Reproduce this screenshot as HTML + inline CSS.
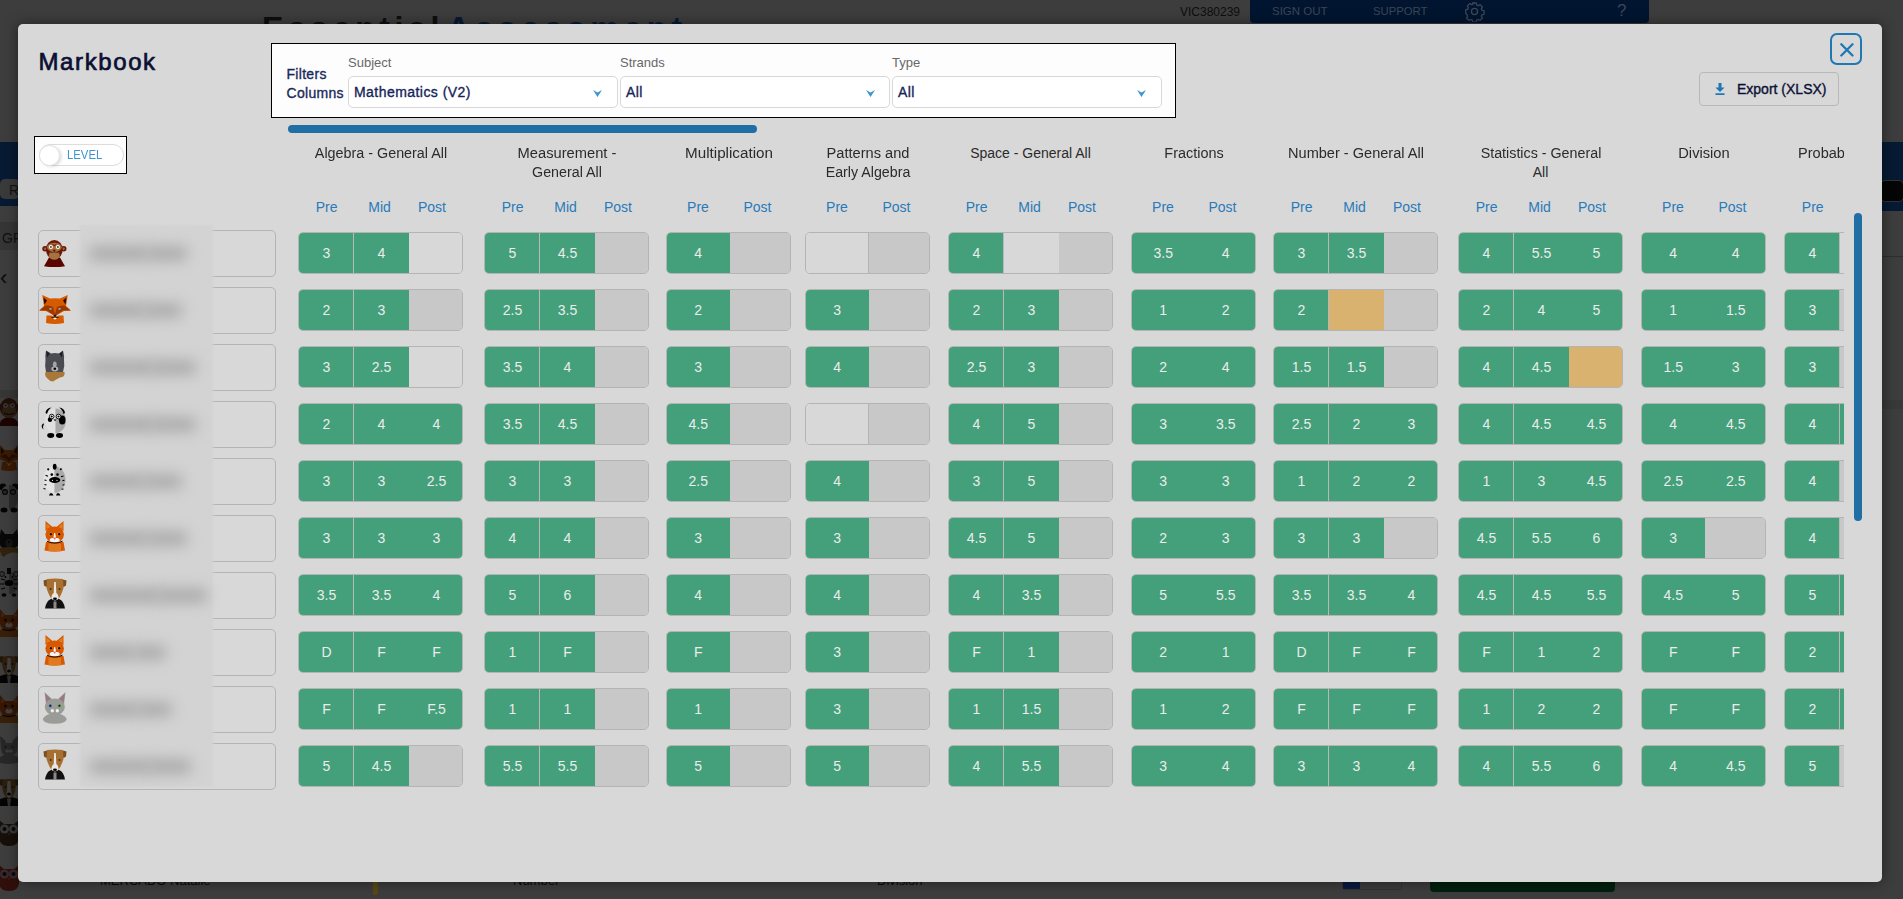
<!DOCTYPE html>
<html><head><meta charset="utf-8">
<style>
*{box-sizing:border-box;margin:0;padding:0}
html,body{width:1903px;height:899px;overflow:hidden;background:#3d3d3d;font-family:"Liberation Sans",sans-serif;position:relative}
.abs{position:absolute}
/* background app (dimmed) */
.bg{position:absolute;left:0;top:0;width:1903px;height:899px;overflow:hidden}
.modal{position:absolute;left:18px;top:24px;width:1864px;height:858px;background:#d8d8d8;border-radius:5px;box-shadow:0 0 14px rgba(0,0,0,.45)}
.page{position:absolute;left:0;top:0;width:1903px;height:899px}
.title{position:absolute;left:38.5px;top:48px;font-size:24px;font-weight:normal;-webkit-text-stroke:0.7px #0b1033;color:#0b1033;letter-spacing:1.6px}
.filt{position:absolute;left:271px;top:43px;width:905px;height:75px;background:#fdfdfd;border:1px solid #000}
.fl{position:absolute;font-size:14px;font-weight:normal;-webkit-text-stroke:0.35px #1c2a5a;letter-spacing:0.3px;color:#1c2a5a;line-height:19px}
.lab{position:absolute;font-size:13px;color:#686868}
.sel{position:absolute;top:76px;height:32px;border:1px solid #d8d8d8;border-radius:5px;background:#fff}
.sel span{position:absolute;left:5px;top:7px;font-size:14px;font-weight:normal;-webkit-text-stroke:0.35px #16245a;letter-spacing:0.45px;color:#16245a}
.chev{position:absolute;top:12.5px;width:9px;height:7px}
.prog{position:absolute;left:288px;top:125px;width:469px;height:8px;background:#1f6fa5;border-radius:4px}
.lvl{position:absolute;left:34px;top:136px;width:93px;height:38px;background:#fdfdfd;border:1px solid #000}
.pill{position:absolute;left:4px;top:7px;width:85px;height:22px;border:1px solid #ddd;border-radius:11px;background:#fff}
.knob{position:absolute;left:-1px;top:-0.5px;width:21px;height:21px;border-radius:50%;background:#fff;border:1px solid #e2e2e2;box-shadow:2px 1px 3px rgba(0,0,0,.12)}
.pill span{position:absolute;left:27px;top:2.5px;font-size:12.3px;color:#3d96cf;transform:scaleX(0.92);transform-origin:0 0}
.close{position:absolute;left:1830px;top:33px;width:32px;height:32px;border:2px solid #1f78b4;border-radius:7px}
.export{position:absolute;left:1699px;top:72px;width:140px;height:34px;border:1px solid #b8b8b8;border-radius:4px}
.export span{position:absolute;left:37px;top:8px;font-size:14px;font-weight:normal;-webkit-text-stroke:0.35px #0b1035;letter-spacing:0px;color:#0b1035}
.hd{position:absolute;top:144px;width:200px;text-align:center;font-size:14px;line-height:19px;color:#2b2b2b}
.pl{position:absolute;top:199px;width:60px;text-align:center;font-size:14px;color:#2a7ab8}
.grp{position:absolute;height:42px;border:1px solid #b4b4b4;border-radius:5px;overflow:hidden;display:flex;background:#d8d8d8}
.c{height:100%;flex:none;text-align:center;font-size:14px;line-height:40px;color:#ececec}
.c.g{background:#43a07a}
.c.x{background:#c8c8c8}
.c.o{background:#d8b26e}
.c.l{background:#d8d8d8}
.dv{position:absolute;top:0;width:1px;height:100%;background:#b9b9b9}
.dv.dk{background:#b4b4b4}
.clipcol{position:absolute;left:1784px;top:0;width:60px;height:899px;overflow:hidden}
.nm{position:absolute;left:38px;width:238px;height:47px;border:1px solid #b4b4b4;border-radius:5px}
.av{position:absolute;left:-1px;top:3px;width:34px;height:38px}
.blur{position:absolute;left:81px;top:226px;width:131px;height:560px;background:#d3d3d3;box-shadow:0 0 3px 1px #d4d4d4}
.smudge{position:absolute;height:15px;border-radius:8px;background:#acacac;filter:blur(7px)}
.sb{position:absolute;left:1854px;top:213px;width:8px;height:308px;background:#1f6fa5;border-radius:4px}
</style></head><body>
<div class="bg">
 <div class="abs" style="left:262px;top:12px;font-size:32px;font-weight:bold;color:#0e0e0e;white-space:nowrap;line-height:32px;letter-spacing:4.6px">Essential<span style="color:#071a33;letter-spacing:5.2px;margin-left:3px">Assessment</span></div>
<div class="abs" style="left:1250px;top:0;width:399px;height:23px;background:#011530;border-radius:0 0 4px 4px"></div>
<div class="abs" style="left:1180px;top:4.5px;font-size:12px;color:#0e0e0e">VIC380239</div>
<div class="abs" style="left:1272px;top:4.5px;font-size:11.5px;color:#3a4656">SIGN OUT</div>
<div class="abs" style="left:1373px;top:4.5px;font-size:11.3px;color:#3a4656">SUPPORT</div>
<svg class="abs" style="left:1464px;top:1px" width="21" height="21" viewBox="0 0 24 24"><path d="M12 2l2 .3.6 2.4 1.6.7 2.1-1.3 2.8 2.8-1.3 2.1.7 1.6 2.4.6v4l-2.4.6-.7 1.6 1.3 2.1-2.8 2.8-2.1-1.3-1.6.7-.6 2.4h-4l-.6-2.4-1.6-.7-2.1 1.3-2.8-2.8 1.3-2.1-.7-1.6L2 14v-4l2.4-.6.7-1.6-1.3-2.1 2.8-2.8 2.1 1.3 1.6-.7L10 2.3z" fill="none" stroke="#3a4656" stroke-width="1.5"/><circle cx="12" cy="12" r="3.5" fill="none" stroke="#3a4656" stroke-width="1.5"/></svg>
<div class="abs" style="left:1617px;top:1px;font-size:17px;color:#3a4656">?</div>
<!-- left strip -->
<div class="abs" style="left:0;top:142px;width:20px;height:64px;background:#061a33"></div>
<div class="abs" style="left:0;top:179px;width:20px;height:20px;background:#3a3a3a;border-radius:5px"></div>
<div class="abs" style="left:9px;top:182px;font-size:14px;color:#111">R</div>
<div class="abs" style="left:0;top:222px;width:20px;height:28px;background:#353535"></div>
<div class="abs" style="left:2px;top:230px;font-size:14px;color:#111">GR</div>
<div class="abs" style="left:0;top:266px;font-size:22px;color:#0a0a0a;line-height:24px">&lsaquo;</div>
<div class="abs" style="left:0;top:390px;width:20px;height:8px;background:#363636"></div>
<!-- right strip -->
<div class="abs" style="left:1882px;top:142px;width:21px;height:69px;background:#061a33"></div>
<div class="abs" style="left:1880px;top:180px;width:24px;height:22px;background:#050505;border:1px solid #333;border-radius:5px"></div>
<div class="abs" style="left:1882px;top:256px;width:21px;height:1px;background:#2e2e2e"></div>
<div class="abs" style="left:1882px;top:400px;width:21px;height:9px;background:#383838"></div>
<!-- bottom strip -->
<div class="abs" style="left:1430px;top:870px;width:185px;height:22px;background:#00200f;border-radius:4px"></div>
<div class="abs" style="left:1342px;top:872px;width:60px;height:18px;border:1px solid #333;border-radius:4px"></div>
<div class="abs" style="left:1343px;top:873px;width:17px;height:16px;background:#0a1a40"></div>
<div class="abs" style="left:373px;top:870px;width:5px;height:25px;background:#5a4a10;border-radius:2px"></div>
<div class="abs" style="left:100px;top:873px;font-size:13px;color:#0a0a0a">MERCADO Natalie</div>
<div class="abs" style="left:513px;top:873px;font-size:13px;color:#0a0a0a">Number</div>
<div class="abs" style="left:877px;top:873px;font-size:13px;color:#0a0a0a">Division</div>
<div class="abs" style="left:-4px;top:397px;filter:brightness(0.25)"><svg width="26" height="30" viewBox="0 0 26 30"><path d="M3 29 Q4 21 13 20 Q22 21 23 29Z" fill="#6b0f0f"/><circle cx="4" cy="10" r="3" fill="#7a3a1a"/><circle cx="22" cy="10" r="3" fill="#7a3a1a"/><ellipse cx="13" cy="11" rx="9" ry="10" fill="#7a3a1a"/><ellipse cx="13" cy="14" rx="7" ry="7" fill="#b07a4a"/><circle cx="9.5" cy="8.5" r="2.2" fill="#fff"/><circle cx="16.5" cy="8.5" r="2.2" fill="#fff"/><circle cx="9.5" cy="8.5" r="1" fill="#222"/><circle cx="16.5" cy="8.5" r="1" fill="#222"/><path d="M8 16 Q13 19 18 16" stroke="#3a1a0a" stroke-width="1.2" fill="none"/></svg></div><div class="abs" style="left:-4px;top:442px;filter:brightness(0.25)"><svg width="26" height="30" viewBox="0 0 26 30"><path d="M6 20 L20 20 L21 28 Q13 30 5 28Z" fill="#e46a10"/><path d="M3 2 L9 8 L17 8 L23 2 L22 14 L26 16 L18 19 L13 23 L8 19 L0 16 L4 14Z" fill="#e46a10"/><path d="M5 5 L8 10 L5 12Z M21 5 L18 10 L21 12Z" fill="#3a1a0a"/><path d="M4 14 L10 12 L13 16 L16 12 L22 14 L16 17 L13 20 L10 17Z" fill="#8a3a10"/><path d="M10 20 L13 22 L16 20 L13 24Z" fill="#fff"/></svg></div><div class="abs" style="left:-4px;top:483px;filter:brightness(0.25)"><svg width="26" height="30" viewBox="0 0 26 30"><circle cx="7" cy="4" r="3.5" fill="#111"/><circle cx="19" cy="4" r="3.5" fill="#111"/><ellipse cx="13" cy="14" rx="9" ry="12" fill="#eee"/><path d="M13 2 Q22 2 22 14 Q22 26 13 26Z" fill="#aaa"/><ellipse cx="9" cy="9" rx="3" ry="3" fill="#111"/><ellipse cx="17" cy="9" rx="3" ry="3" fill="#111"/><circle cx="9" cy="9" r="1.6" fill="#fff"/><circle cx="17" cy="9" r="1.6" fill="#fff"/><circle cx="9" cy="9" r="0.8" fill="#111"/><circle cx="17" cy="9" r="0.8" fill="#111"/><ellipse cx="8" cy="27" rx="3.5" ry="2.5" fill="#111"/><ellipse cx="18" cy="27" rx="3.5" ry="2.5" fill="#111"/><path d="M2 16 Q0 19 2 21Z" fill="#111"/></svg></div><div class="abs" style="left:-4px;top:527px;filter:brightness(0.25)"><svg width="26" height="30" viewBox="0 0 26 30"><path d="M5 2 L9 7 L17 7 L21 2 L23 14 Q23 22 13 23 Q3 22 3 14Z" fill="#202020"/><path d="M5 3 L8 8 L5 10Z M21 3 L18 8 L21 10Z" fill="#222"/><ellipse cx="13" cy="16" rx="3.5" ry="4" fill="#555"/><circle cx="13" cy="15" r="1.4" fill="#222"/><path d="M2 22 Q13 18 24 22 L22 26 Q13 24 8 30 L5 28 Q6 25 2 24Z" fill="#c08a3a"/></svg></div><div class="abs" style="left:-4px;top:567px;filter:brightness(0.25)"><svg width="26" height="30" viewBox="0 0 26 30"><ellipse cx="13" cy="16" rx="9" ry="11" fill="#eee"/><path d="M13 5 Q22 5 22 16 Q22 27 13 27Z" fill="#aaa"/><path d="M11 1 L15 1 L15 7 L11 7Z" fill="#111"/><circle cx="6" cy="7" r="2.5" fill="#ccc" stroke="#111" stroke-width="0.8"/><circle cx="20" cy="7" r="2.5" fill="#ccc" stroke="#111" stroke-width="0.8"/><path d="M5 12 L9 13 M4 17 L8 17 M5 22 L9 21 M21 12 L17 13 M22 17 L18 17 M21 22 L17 21" stroke="#111" stroke-width="1.2"/><ellipse cx="13" cy="16" rx="4.5" ry="3" fill="#111"/><circle cx="9.5" cy="10" r="1" fill="#111"/><circle cx="16.5" cy="10" r="1" fill="#111"/><ellipse cx="8" cy="28" rx="2.5" ry="1.8" fill="#111"/><ellipse cx="18" cy="28" rx="2.5" ry="1.8" fill="#111"/></svg></div><div class="abs" style="left:-4px;top:608px;filter:brightness(0.25)"><svg width="26" height="30" viewBox="0 0 26 30"><path d="M4 22 Q13 19 22 22 L23 29 L3 29Z" fill="#e07a20"/><path d="M4 1 L9 7 L17 7 L22 1 L22 15 Q22 22 13 22 Q4 22 4 15Z" fill="#e05a10"/><path d="M6 4 L8 8 L5 9Z M20 4 L18 8 L21 9Z" fill="#f0a060"/><circle cx="9.5" cy="12" r="1.5" fill="#222"/><circle cx="16.5" cy="12" r="1.5" fill="#222"/><ellipse cx="13" cy="17" rx="3.5" ry="2.5" fill="#fff"/><path d="M12 15 L14 15 L13 16.5Z" fill="#e05a70"/><path d="M6 21 Q13 24 20 21" stroke="#222" stroke-width="1.3" fill="none"/></svg></div><div class="abs" style="left:-4px;top:654px;filter:brightness(0.25)"><svg width="26" height="30" viewBox="0 0 26 30"><path d="M4 22 Q13 18 22 22 L23 29 L3 29Z" fill="#111"/><path d="M11 22 L15 22 L14 29 L12 29Z" fill="#bbb"/><path d="M5 3 Q13 1 21 3 L19 15 Q16 22 13 22 Q10 22 7 15Z" fill="#b57a35"/><path d="M11.5 4 L14.5 4 L15 14 Q17 19 13 21 Q9 19 11 14Z" fill="#fff"/><path d="M2 3 L7 2 L6 9 Q3 8 2 6Z M24 3 L19 2 L20 9 Q23 8 24 6Z" fill="#8a5520"/><ellipse cx="13" cy="17" rx="2" ry="1.5" fill="#111"/><circle cx="9.5" cy="10" r="0.9" fill="#224"/><circle cx="16.5" cy="10" r="0.9" fill="#224"/></svg></div><div class="abs" style="left:-4px;top:694px;filter:brightness(0.25)"><svg width="26" height="30" viewBox="0 0 26 30"><path d="M4 22 Q13 19 22 22 L23 29 L3 29Z" fill="#e07a20"/><path d="M4 1 L9 7 L17 7 L22 1 L22 15 Q22 22 13 22 Q4 22 4 15Z" fill="#e05a10"/><path d="M6 4 L8 8 L5 9Z M20 4 L18 8 L21 9Z" fill="#f0a060"/><circle cx="9.5" cy="12" r="1.5" fill="#222"/><circle cx="16.5" cy="12" r="1.5" fill="#222"/><ellipse cx="13" cy="17" rx="3.5" ry="2.5" fill="#fff"/><path d="M12 15 L14 15 L13 16.5Z" fill="#e05a70"/><path d="M6 21 Q13 24 20 21" stroke="#222" stroke-width="1.3" fill="none"/></svg></div><div class="abs" style="left:-4px;top:735px;filter:brightness(0.25)"><svg width="26" height="30" viewBox="0 0 26 30"><path d="M2 27 Q3 20 13 19 Q23 20 24 27 Q13 31 2 27Z" fill="#9a9c98"/><path d="M4 1 Q9 4 10 8 L16 8 Q17 4 22 1 L21 14 Q21 21 13 21 Q5 21 5 14Z" fill="#9a9c98"/><path d="M5 3 Q8 6 9 8 L6 10Z M21 3 Q18 6 17 8 L20 10Z" fill="#b48890"/><circle cx="9.5" cy="12" r="1.2" fill="#2a6aaa"/><circle cx="16.5" cy="12" r="1.2" fill="#4a8a2a"/><ellipse cx="11.3" cy="16" rx="2" ry="1.6" fill="#eee"/><ellipse cx="14.7" cy="16" rx="2" ry="1.6" fill="#eee"/><path d="M12 13.5 L14 13.5 L13 15Z" fill="#d08890"/></svg></div><div class="abs" style="left:-4px;top:777px;filter:brightness(0.25)"><svg width="26" height="30" viewBox="0 0 26 30"><path d="M4 22 Q13 18 22 22 L23 29 L3 29Z" fill="#111"/><path d="M11 22 L15 22 L14 29 L12 29Z" fill="#bbb"/><path d="M5 3 Q13 1 21 3 L19 15 Q16 22 13 22 Q10 22 7 15Z" fill="#b57a35"/><path d="M11.5 4 L14.5 4 L15 14 Q17 19 13 21 Q9 19 11 14Z" fill="#fff"/><path d="M2 3 L7 2 L6 9 Q3 8 2 6Z M24 3 L19 2 L20 9 Q23 8 24 6Z" fill="#8a5520"/><ellipse cx="13" cy="17" rx="2" ry="1.5" fill="#111"/><circle cx="9.5" cy="10" r="0.9" fill="#224"/><circle cx="16.5" cy="10" r="0.9" fill="#224"/></svg></div><div class="abs" style="left:-4px;top:817px;filter:brightness(0.25)"><svg width="26" height="30" viewBox="0 0 26 30"><path d="M3 3 L8 7 L18 7 L23 3 L23 20 Q23 29 13 29 Q3 29 3 20Z" fill="#5a3a2a"/><circle cx="8.5" cy="12" r="4.5" fill="#ddd"/><circle cx="17.5" cy="12" r="4.5" fill="#ddd"/><circle cx="8.5" cy="12" r="2" fill="#222"/><circle cx="17.5" cy="12" r="2" fill="#222"/><path d="M12 16 L14 16 L13 19Z" fill="#e07020"/></svg></div><div class="abs" style="left:-4px;top:862px;filter:brightness(0.25)"><svg width="26" height="30" viewBox="0 0 26 30"><path d="M3 3 L8 7 L18 7 L23 3 L23 20 Q23 29 13 29 Q3 29 3 20Z" fill="#c03a2a"/><circle cx="8.5" cy="12" r="4.5" fill="#e0a0c0"/><circle cx="17.5" cy="12" r="4.5" fill="#e0a0c0"/><circle cx="8.5" cy="12" r="2" fill="#222"/><circle cx="17.5" cy="12" r="2" fill="#222"/><path d="M12 16 L14 16 L13 19Z" fill="#e07020"/></svg></div>
</div>
<div class="modal"></div>
<div class="page">
 <div class="title">Markbook</div>
 <div class="filt">
  <div class="fl" style="left:14.5px;top:20.7px">Filters<br>Columns</div>
 </div>
 <div class="lab" style="left:348px;top:55.2px">Subject</div>
 <div class="lab" style="left:620px;top:55.2px">Strands</div>
 <div class="lab" style="left:892px;top:55.2px">Type</div>
 <div class="sel" style="left:348px;width:270px"><span>Mathematics (V2)</span><svg class="chev" style="left:244px" viewBox="0 0 9 7"><path d="M0 0 L4.5 2.6 L9 0 L4.5 7Z" fill="#3a96cf"/></svg></div>
 <div class="sel" style="left:620px;width:270px"><span>All</span><svg class="chev" style="left:245px" viewBox="0 0 9 7"><path d="M0 0 L4.5 2.6 L9 0 L4.5 7Z" fill="#3a96cf"/></svg></div>
 <div class="sel" style="left:892px;width:270px"><span>All</span><svg class="chev" style="left:244px" viewBox="0 0 9 7"><path d="M0 0 L4.5 2.6 L9 0 L4.5 7Z" fill="#3a96cf"/></svg></div>
 <div class="prog"></div>
 <div class="lvl"><div class="pill"><div class="knob"></div><span>LEVEL</span></div></div>
 <div class="close"><svg style="position:absolute;left:8px;top:8px" width="14" height="14" viewBox="0 0 14 14"><path d="M1.3 1.3 L12.5 12.5 M12.5 1.3 L1.3 12.5" stroke="#1f78b4" stroke-width="2.3" stroke-linecap="round"/></svg></div>
 <div class="export"><svg style="position:absolute;left:15px;top:10px" width="10" height="12" viewBox="0 0 10 12"><path d="M3.5 0 H6.5 V4.5 H9.5 L5 9 L0.5 4.5 H3.5Z" fill="#1f78b4"/><rect x="0.3" y="10.3" width="9.4" height="1.7" rx="0.8" fill="#1f78b4"/></svg><span>Export (XLSX)</span></div>
<div class="nm" style="top:230px"><div class="av"><svg width="34" height="38" viewBox="0 0 34 38"><path d="M6 32.2 Q16.5 34 27 32.2 L22 23.5 L11 23.5 Z" fill="#5a0600"/><circle cx="7" cy="14.8" r="2.7" fill="#6b1808"/><circle cx="25.8" cy="14.8" r="2.7" fill="#6b1808"/><circle cx="7.4" cy="14.8" r="1.4" fill="#a06a38"/><circle cx="25.4" cy="14.8" r="1.4" fill="#a06a38"/><ellipse cx="16.3" cy="15.5" rx="8.4" ry="9.6" fill="#6b1808"/><ellipse cx="16.3" cy="13.3" rx="7.3" ry="4.6" fill="#a8723e"/><ellipse cx="16.3" cy="21.3" rx="5.4" ry="4.4" fill="#a8723e"/><path d="M13 9 L16.3 11 L19.6 9 L16.3 12.5Z" fill="#6b1808"/><circle cx="12.9" cy="12.9" r="2" fill="#fff"/><circle cx="19.9" cy="12.9" r="2" fill="#fff"/><circle cx="12.9" cy="12.9" r="1" fill="#444"/><circle cx="19.9" cy="12.9" r="1" fill="#444"/><path d="M14.8 15.8 L17.8 15.8 L16.3 18Z" fill="#4a0800"/><path d="M12.5 18.6 Q16.3 17.6 20.1 18.6" stroke="#3a2010" stroke-width="0.7" fill="none"/></svg></div></div>
<div class="nm" style="top:287px"><div class="av"><svg width="34" height="38" viewBox="0 0 34 38"><path d="M8.5 24.5 L13.5 24.5 Q17 28 20.5 24.5 L25.5 24.5 L26 32 Q17 34 8 32 Z" fill="#d65a00"/><path d="M4.2 4 L12 7.5 Q17 6.8 22 7.5 L29.8 4 L28 15 L33 19.5 L26 20 L19 24 L17 25 L15 24 L8 20 L1 19.5 L6 15 Z" fill="#d65a00"/><path d="M5.5 6.5 L9 9.5 L6.5 13.5Z M28.5 6.5 L25 9.5 L27.5 13.5Z" fill="#2a0800"/><path d="M1.5 19.5 L7.5 14.5 Q12 14 15 16 L17 23 L19 16 Q22 14 26.5 14.5 L32.5 19.5 L25 19.5 L18.5 24 L15.5 24 L9 19.5Z" fill="#9a3800"/><ellipse cx="12.5" cy="17.8" rx="1.3" ry="0.9" fill="#9ab0c8"/><ellipse cx="21.5" cy="17.8" rx="1.3" ry="0.9" fill="#9ab0c8"/><ellipse cx="17" cy="24.8" rx="1.6" ry="0.9" fill="#000"/><path d="M13.5 26.5 Q17 25.5 20.5 26.5" stroke="#000" stroke-width="0.8" fill="none"/><ellipse cx="17" cy="27.6" rx="1.6" ry="0.8" fill="#fff"/></svg></div></div>
<div class="nm" style="top:344px"><div class="av"><svg width="34" height="38" viewBox="0 0 34 38"><path d="M7 24.5 Q17 22 26.5 24 Q27.5 29 22 29.5 Q19 31 15 33.5 Q12 33.5 10 31 Q7 29 7 24.5Z" fill="#a87838"/><path d="M8 2.5 Q11 4 13 5.5 Q17 4.5 21 5.5 Q23 4 25 2.5 Q26.5 8 26 12 Q27 18 25 24 L8 24 Q6.5 18 7.5 12 Q7 8 8 2.5Z" fill="#4a4c52"/><path d="M8.2 3 L11.8 5.8 L9 9.5Z M24.8 3 L21.2 5.8 L24 9.5Z" fill="#1e1e22"/><ellipse cx="16.8" cy="16.5" rx="1.9" ry="3" fill="#a4a4a4"/><ellipse cx="16.8" cy="21" rx="3.5" ry="2.4" fill="#b0b0b0"/><circle cx="16.8" cy="20.8" r="1.3" fill="#000"/></svg></div></div>
<div class="nm" style="top:401px"><div class="av"><svg width="34" height="38" viewBox="0 0 34 38"><path d="M17.5 3.4 A10.5 12.3 0 0 0 17.5 28 Z" fill="#e0e0e0"/><path d="M17.5 3.4 A10.5 12.3 0 0 1 17.5 28 Z" fill="#a8a8a8"/><path d="M7.5 8 Q8 3 13.5 2.5 Q10 4.5 9 9Z" fill="#000"/><path d="M27 8 Q26.5 3 21 2.5 Q24.5 4.5 25.5 9Z" fill="#000"/><ellipse cx="24.2" cy="15" rx="3.3" ry="4.6" fill="#000"/><ellipse cx="12" cy="14.5" rx="2.2" ry="2.5" fill="#000"/><circle cx="13.7" cy="11.5" r="2.3" fill="#fff" stroke="#000" stroke-width="0.9"/><circle cx="20.5" cy="11.5" r="2.3" fill="#fff" stroke="#000" stroke-width="0.9"/><circle cx="13.7" cy="11.5" r="1.1" fill="#000"/><circle cx="20.5" cy="11.5" r="1.1" fill="#000"/><path d="M15.5 14.5 L18.5 14.5 L17 16.3Z" fill="#000"/><path d="M5 18.5 Q2 21.5 5.5 24.5 Q4.5 21.5 6 18.8Z" fill="#000"/><ellipse cx="12.7" cy="30.5" rx="3.5" ry="2.4" fill="#000"/><ellipse cx="21.5" cy="30.5" rx="3.5" ry="2.4" fill="#000"/></svg></div></div>
<div class="nm" style="top:458px"><div class="av"><svg width="34" height="38" viewBox="0 0 34 38"><path d="M16.5 4.2 A11 13.3 0 0 0 16.5 30.8 Z" fill="#e4e4e4"/><path d="M16.5 4.2 A11 13.3 0 0 1 16.5 30.8 Z" fill="#aaaaaa"/><ellipse cx="16.7" cy="4.8" rx="1.9" ry="3" fill="#000"/><ellipse cx="10" cy="7" rx="2" ry="1.8" fill="#ddd"/><ellipse cx="23" cy="7" rx="2" ry="1.8" fill="#ccc"/><ellipse cx="10.2" cy="7.3" rx="1.1" ry="1.1" fill="#000"/><ellipse cx="22.8" cy="7.3" rx="1.1" ry="1.1" fill="#000"/><circle cx="13.8" cy="12.6" r="1.3" fill="#000"/><circle cx="19.5" cy="12.6" r="1.3" fill="#000"/><ellipse cx="16.7" cy="18" rx="5.6" ry="3" fill="#000"/><circle cx="14.5" cy="18.3" r="0.6" fill="#fff"/><circle cx="19" cy="18.3" r="0.6" fill="#fff"/><path d="M7.5 13.3 L10 14.3 M6.5 18 L8.5 18.5 M6.5 22.5 L8.5 23 M5.5 26.5 L7.5 27 M25.5 14 L23 14.8 M26.5 18.3 L24.5 18.6 M26.5 22.8 L24.5 23 M25.5 27 L23.5 27.3" stroke="#000" stroke-width="1.1"/><path d="M11 33.5 Q11.5 31 13 31 Q14.8 31 15.5 33.5Z M18 33.5 Q18.5 31 20 31 Q21.8 31 22.5 33.5Z" fill="#000"/></svg></div></div>
<div class="nm" style="top:515px"><div class="av"><svg width="34" height="38" viewBox="0 0 34 38"><path d="M8 23 L25.5 23 L27 31.5 Q16.7 33.5 6.5 31.5Z" fill="#d85800"/><path d="M10.5 24.5 L23 24.5 L23 32.3 Q16.7 33 10.5 32.3Z" fill="#e07a20"/><path d="M7.5 2 L14.5 8 L7.5 12Z M25.5 2 L18.5 8 L25.5 12Z" fill="#d85800"/><path d="M8.5 4.5 L12.5 8 L8.5 10Z M24.5 4.5 L20.5 8 L24.5 10Z" fill="#e08020"/><ellipse cx="16.7" cy="15.5" rx="9.3" ry="8" fill="#d85800"/><circle cx="12.7" cy="15.3" r="1.9" fill="#e08020"/><circle cx="21" cy="15.3" r="1.9" fill="#e08020"/><circle cx="12.9" cy="15.3" r="1.2" fill="#2a0a00"/><circle cx="21.2" cy="15.3" r="1.2" fill="#2a0a00"/><path d="M16.2 14 L17.2 14 L18 18.5 L15.4 18.5Z" fill="#f4f4f4"/><ellipse cx="16.7" cy="21" rx="5" ry="2.3" fill="#f4f4f4"/><path d="M15.4 19.3 L18 19.3 L16.7 20.8Z" fill="#d84060"/><path d="M9 22.2 Q16.7 26 24.5 22.2" stroke="#1a0500" stroke-width="1" fill="none"/></svg></div></div>
<div class="nm" style="top:572px"><div class="av"><svg width="34" height="38" viewBox="0 0 34 38"><path d="M7 32.5 Q8 25 13 23 L21 23 Q26 25 27 32.5Z" fill="#111"/><path d="M15.5 25.5 L18.5 25.5 L18.5 33 L15.5 33Z" fill="#8a8a8a"/><path d="M5.5 4.5 Q9 3 12 3.5 L11 10.5 Q8 11.5 6 9.5 Z M28.5 4.5 Q25 3 22 3.5 L23 10.5 Q26 11.5 28 9.5Z" fill="#7a5020"/><path d="M9 3 Q17 1.8 25 3 L25.5 12 Q23 20 20 23.5 L14 23.5 Q11 20 8.5 12 Z" fill="#a87030"/><path d="M16.2 6 L17.8 6 L18.3 17 Q21 19 20.5 22.8 Q17 26 13.5 22.8 Q13 19 15.7 17Z" fill="#e8e8e8"/><circle cx="12.7" cy="13" r="1" fill="#333"/><circle cx="21.5" cy="13" r="1" fill="#333"/><ellipse cx="17" cy="22.8" rx="2" ry="1.3" fill="#000"/></svg></div></div>
<div class="nm" style="top:629px"><div class="av"><svg width="34" height="38" viewBox="0 0 34 38"><path d="M8 23 L25.5 23 L27 31.5 Q16.7 33.5 6.5 31.5Z" fill="#d85800"/><path d="M10.5 24.5 L23 24.5 L23 32.3 Q16.7 33 10.5 32.3Z" fill="#e07a20"/><path d="M7.5 2 L14.5 8 L7.5 12Z M25.5 2 L18.5 8 L25.5 12Z" fill="#d85800"/><path d="M8.5 4.5 L12.5 8 L8.5 10Z M24.5 4.5 L20.5 8 L24.5 10Z" fill="#e08020"/><ellipse cx="16.7" cy="15.5" rx="9.3" ry="8" fill="#d85800"/><circle cx="12.7" cy="15.3" r="1.9" fill="#e08020"/><circle cx="21" cy="15.3" r="1.9" fill="#e08020"/><circle cx="12.9" cy="15.3" r="1.2" fill="#2a0a00"/><circle cx="21.2" cy="15.3" r="1.2" fill="#2a0a00"/><path d="M16.2 14 L17.2 14 L18 18.5 L15.4 18.5Z" fill="#f4f4f4"/><ellipse cx="16.7" cy="21" rx="5" ry="2.3" fill="#f4f4f4"/><path d="M15.4 19.3 L18 19.3 L16.7 20.8Z" fill="#d84060"/><path d="M9 22.2 Q16.7 26 24.5 22.2" stroke="#1a0500" stroke-width="1" fill="none"/></svg></div></div>
<div class="nm" style="top:686px"><div class="av"><svg width="34" height="38" viewBox="0 0 34 38"><path d="M4.8 29 Q7 24 16.8 23 Q26.5 24 28.8 29 Q28 33.5 16.8 33.8 Q5 33.5 4.8 29Z" fill="#9a9c98"/><path d="M6.5 2 L14 9 L8 14.5Z M27.5 2 L20 9 L26 14.5Z" fill="#9a9c98"/><path d="M7.2 3.5 L12.8 9 L8.6 13Z M26.8 3.5 L21.2 9 L25.4 13Z" fill="#9a7880"/><ellipse cx="16.8" cy="17" rx="10" ry="8.5" fill="#9a9c98"/><circle cx="12.3" cy="15.8" r="1.5" fill="#2060a0"/><circle cx="21.4" cy="15.8" r="1.5" fill="#3a8a20"/><circle cx="12.3" cy="15.8" r="0.8" fill="#111"/><circle cx="21.4" cy="15.8" r="0.8" fill="#111"/><circle cx="14.3" cy="20.8" r="1.7" fill="#eee"/><circle cx="19.3" cy="20.8" r="1.7" fill="#eee"/><path d="M15.6 18.6 L17.8 18.6 L16.7 20Z" fill="#c08890"/></svg></div></div>
<div class="nm" style="top:743px"><div class="av"><svg width="34" height="38" viewBox="0 0 34 38"><path d="M7 32.5 Q8 25 13 23 L21 23 Q26 25 27 32.5Z" fill="#111"/><path d="M15.5 25.5 L18.5 25.5 L18.5 33 L15.5 33Z" fill="#8a8a8a"/><path d="M5.5 4.5 Q9 3 12 3.5 L11 10.5 Q8 11.5 6 9.5 Z M28.5 4.5 Q25 3 22 3.5 L23 10.5 Q26 11.5 28 9.5Z" fill="#7a5020"/><path d="M9 3 Q17 1.8 25 3 L25.5 12 Q23 20 20 23.5 L14 23.5 Q11 20 8.5 12 Z" fill="#a87030"/><path d="M16.2 6 L17.8 6 L18.3 17 Q21 19 20.5 22.8 Q17 26 13.5 22.8 Q13 19 15.7 17Z" fill="#e8e8e8"/><circle cx="12.7" cy="13" r="1" fill="#333"/><circle cx="21.5" cy="13" r="1" fill="#333"/><ellipse cx="17" cy="22.8" rx="2" ry="1.3" fill="#000"/></svg></div></div>
 <div class="blur"><div class="smudge" style="left:7px;top:19.5px;width:62px"></div><div class="smudge" style="left:64px;top:19.5px;width:43px"></div><div class="smudge" style="left:7px;top:76.5px;width:59px"></div><div class="smudge" style="left:61px;top:76.5px;width:41px"></div><div class="smudge" style="left:7px;top:133.5px;width:68px"></div><div class="smudge" style="left:69px;top:133.5px;width:47px"></div><div class="smudge" style="left:7px;top:190.5px;width:68px"></div><div class="smudge" style="left:69px;top:190.5px;width:47px"></div><div class="smudge" style="left:7px;top:247.5px;width:59px"></div><div class="smudge" style="left:61px;top:247.5px;width:41px"></div><div class="smudge" style="left:7px;top:304.5px;width:62px"></div><div class="smudge" style="left:64px;top:304.5px;width:43px"></div><div class="smudge" style="left:7px;top:361.5px;width:74px"></div><div class="smudge" style="left:75px;top:361.5px;width:52px"></div><div class="smudge" style="left:7px;top:418.5px;width:49px"></div><div class="smudge" style="left:52px;top:418.5px;width:34px"></div><div class="smudge" style="left:7px;top:475.5px;width:53px"></div><div class="smudge" style="left:55px;top:475.5px;width:37px"></div><div class="smudge" style="left:7px;top:532.5px;width:65px"></div><div class="smudge" style="left:66px;top:532.5px;width:45px"></div></div>
<div class="hd" style="left:280.5px;top:144px;transform:scaleX(1.024)">Algebra - General All</div>
<div class="pl" style="left:296.7px">Pre</div>
<div class="pl" style="left:349.5px">Mid</div>
<div class="pl" style="left:402.0px">Post</div>
<div class="grp" style="left:298px;top:232px;width:165px"><div class="c g" style="width:55.0px">3</div><div class="c g" style="width:55.0px">4</div><div class="c l" style="width:55.0px"></div><div class="dv" style="left:54px"></div></div>
<div class="grp" style="left:298px;top:289px;width:165px"><div class="c g" style="width:55.0px">2</div><div class="c g" style="width:55.0px">3</div><div class="c x" style="width:55.0px"></div><div class="dv" style="left:54px"></div></div>
<div class="grp" style="left:298px;top:346px;width:165px"><div class="c g" style="width:55.0px">3</div><div class="c g" style="width:55.0px">2.5</div><div class="c l" style="width:55.0px"></div><div class="dv" style="left:54px"></div></div>
<div class="grp" style="left:298px;top:403px;width:165px"><div class="c g" style="width:55.0px">2</div><div class="c g" style="width:55.0px">4</div><div class="c g" style="width:55.0px">4</div><div class="dv" style="left:54px"></div></div>
<div class="grp" style="left:298px;top:460px;width:165px"><div class="c g" style="width:55.0px">3</div><div class="c g" style="width:55.0px">3</div><div class="c g" style="width:55.0px">2.5</div><div class="dv" style="left:54px"></div></div>
<div class="grp" style="left:298px;top:517px;width:165px"><div class="c g" style="width:55.0px">3</div><div class="c g" style="width:55.0px">3</div><div class="c g" style="width:55.0px">3</div><div class="dv" style="left:54px"></div></div>
<div class="grp" style="left:298px;top:574px;width:165px"><div class="c g" style="width:55.0px">3.5</div><div class="c g" style="width:55.0px">3.5</div><div class="c g" style="width:55.0px">4</div><div class="dv" style="left:54px"></div></div>
<div class="grp" style="left:298px;top:631px;width:165px"><div class="c g" style="width:55.0px">D</div><div class="c g" style="width:55.0px">F</div><div class="c g" style="width:55.0px">F</div><div class="dv" style="left:54px"></div></div>
<div class="grp" style="left:298px;top:688px;width:165px"><div class="c g" style="width:55.0px">F</div><div class="c g" style="width:55.0px">F</div><div class="c g" style="width:55.0px">F.5</div><div class="dv" style="left:54px"></div></div>
<div class="grp" style="left:298px;top:745px;width:165px"><div class="c g" style="width:55.0px">5</div><div class="c g" style="width:55.0px">4.5</div><div class="c x" style="width:55.0px"></div><div class="dv" style="left:54px"></div></div>
<div class="hd" style="left:466.5px;top:144px;transform:scaleX(1.050)">Measurement -</div>
<div class="hd" style="left:466.5px;top:163px;transform:scaleX(1.020)">General All</div>
<div class="pl" style="left:482.7px">Pre</div>
<div class="pl" style="left:535.5px">Mid</div>
<div class="pl" style="left:588.0px">Post</div>
<div class="grp" style="left:484px;top:232px;width:165px"><div class="c g" style="width:55.0px">5</div><div class="c g" style="width:55.0px">4.5</div><div class="c x" style="width:55.0px"></div><div class="dv" style="left:54px"></div></div>
<div class="grp" style="left:484px;top:289px;width:165px"><div class="c g" style="width:55.0px">2.5</div><div class="c g" style="width:55.0px">3.5</div><div class="c x" style="width:55.0px"></div><div class="dv" style="left:54px"></div></div>
<div class="grp" style="left:484px;top:346px;width:165px"><div class="c g" style="width:55.0px">3.5</div><div class="c g" style="width:55.0px">4</div><div class="c x" style="width:55.0px"></div><div class="dv" style="left:54px"></div></div>
<div class="grp" style="left:484px;top:403px;width:165px"><div class="c g" style="width:55.0px">3.5</div><div class="c g" style="width:55.0px">4.5</div><div class="c x" style="width:55.0px"></div><div class="dv" style="left:54px"></div></div>
<div class="grp" style="left:484px;top:460px;width:165px"><div class="c g" style="width:55.0px">3</div><div class="c g" style="width:55.0px">3</div><div class="c x" style="width:55.0px"></div><div class="dv" style="left:54px"></div></div>
<div class="grp" style="left:484px;top:517px;width:165px"><div class="c g" style="width:55.0px">4</div><div class="c g" style="width:55.0px">4</div><div class="c x" style="width:55.0px"></div><div class="dv" style="left:54px"></div></div>
<div class="grp" style="left:484px;top:574px;width:165px"><div class="c g" style="width:55.0px">5</div><div class="c g" style="width:55.0px">6</div><div class="c x" style="width:55.0px"></div><div class="dv" style="left:54px"></div></div>
<div class="grp" style="left:484px;top:631px;width:165px"><div class="c g" style="width:55.0px">1</div><div class="c g" style="width:55.0px">F</div><div class="c x" style="width:55.0px"></div><div class="dv" style="left:54px"></div></div>
<div class="grp" style="left:484px;top:688px;width:165px"><div class="c g" style="width:55.0px">1</div><div class="c g" style="width:55.0px">1</div><div class="c x" style="width:55.0px"></div><div class="dv" style="left:54px"></div></div>
<div class="grp" style="left:484px;top:745px;width:165px"><div class="c g" style="width:55.0px">5.5</div><div class="c g" style="width:55.0px">5.5</div><div class="c x" style="width:55.0px"></div><div class="dv" style="left:54px"></div></div>
<div class="hd" style="left:628.5px;top:144px;transform:scaleX(1.087)">Multiplication</div>
<div class="pl" style="left:668.0px">Pre</div>
<div class="pl" style="left:727.5px">Post</div>
<div class="grp" style="left:666px;top:232px;width:125px"><div class="c g" style="width:62.5px">4</div><div class="c x" style="width:62.5px"></div></div>
<div class="grp" style="left:666px;top:289px;width:125px"><div class="c g" style="width:62.5px">2</div><div class="c x" style="width:62.5px"></div></div>
<div class="grp" style="left:666px;top:346px;width:125px"><div class="c g" style="width:62.5px">3</div><div class="c x" style="width:62.5px"></div></div>
<div class="grp" style="left:666px;top:403px;width:125px"><div class="c g" style="width:62.5px">4.5</div><div class="c x" style="width:62.5px"></div></div>
<div class="grp" style="left:666px;top:460px;width:125px"><div class="c g" style="width:62.5px">2.5</div><div class="c x" style="width:62.5px"></div></div>
<div class="grp" style="left:666px;top:517px;width:125px"><div class="c g" style="width:62.5px">3</div><div class="c x" style="width:62.5px"></div></div>
<div class="grp" style="left:666px;top:574px;width:125px"><div class="c g" style="width:62.5px">4</div><div class="c x" style="width:62.5px"></div></div>
<div class="grp" style="left:666px;top:631px;width:125px"><div class="c g" style="width:62.5px">F</div><div class="c x" style="width:62.5px"></div></div>
<div class="grp" style="left:666px;top:688px;width:125px"><div class="c g" style="width:62.5px">1</div><div class="c x" style="width:62.5px"></div></div>
<div class="grp" style="left:666px;top:745px;width:125px"><div class="c g" style="width:62.5px">5</div><div class="c x" style="width:62.5px"></div></div>
<div class="hd" style="left:767.5px;top:144px;transform:scaleX(1.045)">Patterns and</div>
<div class="hd" style="left:767.5px;top:163px;transform:scaleX(1.016)">Early Algebra</div>
<div class="pl" style="left:807.0px">Pre</div>
<div class="pl" style="left:866.5px">Post</div>
<div class="grp" style="left:805px;top:232px;width:125px"><div class="c l" style="width:62.5px"></div><div class="c x" style="width:62.5px"></div><div class="dv dk" style="left:62.0px"></div></div>
<div class="grp" style="left:805px;top:289px;width:125px"><div class="c g" style="width:62.5px">3</div><div class="c x" style="width:62.5px"></div></div>
<div class="grp" style="left:805px;top:346px;width:125px"><div class="c g" style="width:62.5px">4</div><div class="c x" style="width:62.5px"></div></div>
<div class="grp" style="left:805px;top:403px;width:125px"><div class="c l" style="width:62.5px"></div><div class="c x" style="width:62.5px"></div><div class="dv dk" style="left:62.0px"></div></div>
<div class="grp" style="left:805px;top:460px;width:125px"><div class="c g" style="width:62.5px">4</div><div class="c x" style="width:62.5px"></div></div>
<div class="grp" style="left:805px;top:517px;width:125px"><div class="c g" style="width:62.5px">3</div><div class="c x" style="width:62.5px"></div></div>
<div class="grp" style="left:805px;top:574px;width:125px"><div class="c g" style="width:62.5px">4</div><div class="c x" style="width:62.5px"></div></div>
<div class="grp" style="left:805px;top:631px;width:125px"><div class="c g" style="width:62.5px">3</div><div class="c x" style="width:62.5px"></div></div>
<div class="grp" style="left:805px;top:688px;width:125px"><div class="c g" style="width:62.5px">3</div><div class="c x" style="width:62.5px"></div></div>
<div class="grp" style="left:805px;top:745px;width:125px"><div class="c g" style="width:62.5px">5</div><div class="c x" style="width:62.5px"></div></div>
<div class="hd" style="left:930.5px;top:144px;transform:scaleX(1.000)">Space - General All</div>
<div class="pl" style="left:946.7px">Pre</div>
<div class="pl" style="left:999.5px">Mid</div>
<div class="pl" style="left:1052.0px">Post</div>
<div class="grp" style="left:948px;top:232px;width:165px"><div class="c g" style="width:55.0px">4</div><div class="c l" style="width:55.0px"></div><div class="c x" style="width:55.0px"></div><div class="dv" style="left:54px"></div></div>
<div class="grp" style="left:948px;top:289px;width:165px"><div class="c g" style="width:55.0px">2</div><div class="c g" style="width:55.0px">3</div><div class="c x" style="width:55.0px"></div><div class="dv" style="left:54px"></div></div>
<div class="grp" style="left:948px;top:346px;width:165px"><div class="c g" style="width:55.0px">2.5</div><div class="c g" style="width:55.0px">3</div><div class="c x" style="width:55.0px"></div><div class="dv" style="left:54px"></div></div>
<div class="grp" style="left:948px;top:403px;width:165px"><div class="c g" style="width:55.0px">4</div><div class="c g" style="width:55.0px">5</div><div class="c x" style="width:55.0px"></div><div class="dv" style="left:54px"></div></div>
<div class="grp" style="left:948px;top:460px;width:165px"><div class="c g" style="width:55.0px">3</div><div class="c g" style="width:55.0px">5</div><div class="c x" style="width:55.0px"></div><div class="dv" style="left:54px"></div></div>
<div class="grp" style="left:948px;top:517px;width:165px"><div class="c g" style="width:55.0px">4.5</div><div class="c g" style="width:55.0px">5</div><div class="c x" style="width:55.0px"></div><div class="dv" style="left:54px"></div></div>
<div class="grp" style="left:948px;top:574px;width:165px"><div class="c g" style="width:55.0px">4</div><div class="c g" style="width:55.0px">3.5</div><div class="c x" style="width:55.0px"></div><div class="dv" style="left:54px"></div></div>
<div class="grp" style="left:948px;top:631px;width:165px"><div class="c g" style="width:55.0px">F</div><div class="c g" style="width:55.0px">1</div><div class="c x" style="width:55.0px"></div><div class="dv" style="left:54px"></div></div>
<div class="grp" style="left:948px;top:688px;width:165px"><div class="c g" style="width:55.0px">1</div><div class="c g" style="width:55.0px">1.5</div><div class="c x" style="width:55.0px"></div><div class="dv" style="left:54px"></div></div>
<div class="grp" style="left:948px;top:745px;width:165px"><div class="c g" style="width:55.0px">4</div><div class="c g" style="width:55.0px">5.5</div><div class="c x" style="width:55.0px"></div><div class="dv" style="left:54px"></div></div>
<div class="hd" style="left:1093.5px;top:144px;transform:scaleX(1.030)">Fractions</div>
<div class="pl" style="left:1133.0px">Pre</div>
<div class="pl" style="left:1192.5px">Post</div>
<div class="grp" style="left:1131px;top:232px;width:125px"><div class="c g" style="width:62.5px">3.5</div><div class="c g" style="width:62.5px">4</div></div>
<div class="grp" style="left:1131px;top:289px;width:125px"><div class="c g" style="width:62.5px">1</div><div class="c g" style="width:62.5px">2</div></div>
<div class="grp" style="left:1131px;top:346px;width:125px"><div class="c g" style="width:62.5px">2</div><div class="c g" style="width:62.5px">4</div></div>
<div class="grp" style="left:1131px;top:403px;width:125px"><div class="c g" style="width:62.5px">3</div><div class="c g" style="width:62.5px">3.5</div></div>
<div class="grp" style="left:1131px;top:460px;width:125px"><div class="c g" style="width:62.5px">3</div><div class="c g" style="width:62.5px">3</div></div>
<div class="grp" style="left:1131px;top:517px;width:125px"><div class="c g" style="width:62.5px">2</div><div class="c g" style="width:62.5px">3</div></div>
<div class="grp" style="left:1131px;top:574px;width:125px"><div class="c g" style="width:62.5px">5</div><div class="c g" style="width:62.5px">5.5</div></div>
<div class="grp" style="left:1131px;top:631px;width:125px"><div class="c g" style="width:62.5px">2</div><div class="c g" style="width:62.5px">1</div></div>
<div class="grp" style="left:1131px;top:688px;width:125px"><div class="c g" style="width:62.5px">1</div><div class="c g" style="width:62.5px">2</div></div>
<div class="grp" style="left:1131px;top:745px;width:125px"><div class="c g" style="width:62.5px">3</div><div class="c g" style="width:62.5px">4</div></div>
<div class="hd" style="left:1255.5px;top:144px;transform:scaleX(1.040)">Number - General All</div>
<div class="pl" style="left:1271.7px">Pre</div>
<div class="pl" style="left:1324.5px">Mid</div>
<div class="pl" style="left:1377.0px">Post</div>
<div class="grp" style="left:1273px;top:232px;width:165px"><div class="c g" style="width:55.0px">3</div><div class="c g" style="width:55.0px">3.5</div><div class="c x" style="width:55.0px"></div><div class="dv" style="left:54px"></div></div>
<div class="grp" style="left:1273px;top:289px;width:165px"><div class="c g" style="width:55.0px">2</div><div class="c o" style="width:55.0px"></div><div class="c x" style="width:55.0px"></div><div class="dv" style="left:54px"></div></div>
<div class="grp" style="left:1273px;top:346px;width:165px"><div class="c g" style="width:55.0px">1.5</div><div class="c g" style="width:55.0px">1.5</div><div class="c x" style="width:55.0px"></div><div class="dv" style="left:54px"></div></div>
<div class="grp" style="left:1273px;top:403px;width:165px"><div class="c g" style="width:55.0px">2.5</div><div class="c g" style="width:55.0px">2</div><div class="c g" style="width:55.0px">3</div><div class="dv" style="left:54px"></div></div>
<div class="grp" style="left:1273px;top:460px;width:165px"><div class="c g" style="width:55.0px">1</div><div class="c g" style="width:55.0px">2</div><div class="c g" style="width:55.0px">2</div><div class="dv" style="left:54px"></div></div>
<div class="grp" style="left:1273px;top:517px;width:165px"><div class="c g" style="width:55.0px">3</div><div class="c g" style="width:55.0px">3</div><div class="c x" style="width:55.0px"></div><div class="dv" style="left:54px"></div></div>
<div class="grp" style="left:1273px;top:574px;width:165px"><div class="c g" style="width:55.0px">3.5</div><div class="c g" style="width:55.0px">3.5</div><div class="c g" style="width:55.0px">4</div><div class="dv" style="left:54px"></div></div>
<div class="grp" style="left:1273px;top:631px;width:165px"><div class="c g" style="width:55.0px">D</div><div class="c g" style="width:55.0px">F</div><div class="c g" style="width:55.0px">F</div><div class="dv" style="left:54px"></div></div>
<div class="grp" style="left:1273px;top:688px;width:165px"><div class="c g" style="width:55.0px">F</div><div class="c g" style="width:55.0px">F</div><div class="c g" style="width:55.0px">F</div><div class="dv" style="left:54px"></div></div>
<div class="grp" style="left:1273px;top:745px;width:165px"><div class="c g" style="width:55.0px">3</div><div class="c g" style="width:55.0px">3</div><div class="c g" style="width:55.0px">4</div><div class="dv" style="left:54px"></div></div>
<div class="hd" style="left:1440.5px;top:144px;transform:scaleX(1.020)">Statistics - General</div>
<div class="hd" style="left:1440.5px;top:163px;transform:scaleX(1.000)">All</div>
<div class="pl" style="left:1456.7px">Pre</div>
<div class="pl" style="left:1509.5px">Mid</div>
<div class="pl" style="left:1562.0px">Post</div>
<div class="grp" style="left:1458px;top:232px;width:165px"><div class="c g" style="width:55.0px">4</div><div class="c g" style="width:55.0px">5.5</div><div class="c g" style="width:55.0px">5</div><div class="dv" style="left:54px"></div></div>
<div class="grp" style="left:1458px;top:289px;width:165px"><div class="c g" style="width:55.0px">2</div><div class="c g" style="width:55.0px">4</div><div class="c g" style="width:55.0px">5</div><div class="dv" style="left:54px"></div></div>
<div class="grp" style="left:1458px;top:346px;width:165px"><div class="c g" style="width:55.0px">4</div><div class="c g" style="width:55.0px">4.5</div><div class="c o" style="width:55.0px"></div><div class="dv" style="left:54px"></div></div>
<div class="grp" style="left:1458px;top:403px;width:165px"><div class="c g" style="width:55.0px">4</div><div class="c g" style="width:55.0px">4.5</div><div class="c g" style="width:55.0px">4.5</div><div class="dv" style="left:54px"></div></div>
<div class="grp" style="left:1458px;top:460px;width:165px"><div class="c g" style="width:55.0px">1</div><div class="c g" style="width:55.0px">3</div><div class="c g" style="width:55.0px">4.5</div><div class="dv" style="left:54px"></div></div>
<div class="grp" style="left:1458px;top:517px;width:165px"><div class="c g" style="width:55.0px">4.5</div><div class="c g" style="width:55.0px">5.5</div><div class="c g" style="width:55.0px">6</div><div class="dv" style="left:54px"></div></div>
<div class="grp" style="left:1458px;top:574px;width:165px"><div class="c g" style="width:55.0px">4.5</div><div class="c g" style="width:55.0px">4.5</div><div class="c g" style="width:55.0px">5.5</div><div class="dv" style="left:54px"></div></div>
<div class="grp" style="left:1458px;top:631px;width:165px"><div class="c g" style="width:55.0px">F</div><div class="c g" style="width:55.0px">1</div><div class="c g" style="width:55.0px">2</div><div class="dv" style="left:54px"></div></div>
<div class="grp" style="left:1458px;top:688px;width:165px"><div class="c g" style="width:55.0px">1</div><div class="c g" style="width:55.0px">2</div><div class="c g" style="width:55.0px">2</div><div class="dv" style="left:54px"></div></div>
<div class="grp" style="left:1458px;top:745px;width:165px"><div class="c g" style="width:55.0px">4</div><div class="c g" style="width:55.0px">5.5</div><div class="c g" style="width:55.0px">6</div><div class="dv" style="left:54px"></div></div>
<div class="hd" style="left:1603.5px;top:144px;transform:scaleX(1.050)">Division</div>
<div class="pl" style="left:1643.0px">Pre</div>
<div class="pl" style="left:1702.5px">Post</div>
<div class="grp" style="left:1641px;top:232px;width:125px"><div class="c g" style="width:62.5px">4</div><div class="c g" style="width:62.5px">4</div></div>
<div class="grp" style="left:1641px;top:289px;width:125px"><div class="c g" style="width:62.5px">1</div><div class="c g" style="width:62.5px">1.5</div></div>
<div class="grp" style="left:1641px;top:346px;width:125px"><div class="c g" style="width:62.5px">1.5</div><div class="c g" style="width:62.5px">3</div></div>
<div class="grp" style="left:1641px;top:403px;width:125px"><div class="c g" style="width:62.5px">4</div><div class="c g" style="width:62.5px">4.5</div></div>
<div class="grp" style="left:1641px;top:460px;width:125px"><div class="c g" style="width:62.5px">2.5</div><div class="c g" style="width:62.5px">2.5</div></div>
<div class="grp" style="left:1641px;top:517px;width:125px"><div class="c g" style="width:62.5px">3</div><div class="c x" style="width:62.5px"></div></div>
<div class="grp" style="left:1641px;top:574px;width:125px"><div class="c g" style="width:62.5px">4.5</div><div class="c g" style="width:62.5px">5</div></div>
<div class="grp" style="left:1641px;top:631px;width:125px"><div class="c g" style="width:62.5px">F</div><div class="c g" style="width:62.5px">F</div></div>
<div class="grp" style="left:1641px;top:688px;width:125px"><div class="c g" style="width:62.5px">F</div><div class="c g" style="width:62.5px">F</div></div>
<div class="grp" style="left:1641px;top:745px;width:125px"><div class="c g" style="width:62.5px">4</div><div class="c g" style="width:62.5px">4.5</div></div>
<div class="clipcol">
<div class="hd" style="left:14px;width:200px;text-align:left;transform:scaleX(1.04);transform-origin:0 0">Probability</div>
<div class="pl" style="left:-1.3px">Pre</div>
<div class="grp" style="left:0px;top:232px;width:165px"><div class="c g" style="width:55px">4</div><div class="c l" style="width:55px"></div><div class="c x" style="width:55px"></div><div class="dv" style="left:54px"></div></div>
<div class="grp" style="left:0px;top:289px;width:165px"><div class="c g" style="width:55px">3</div><div class="c x" style="width:55px"></div><div class="c x" style="width:55px"></div><div class="dv" style="left:54px"></div></div>
<div class="grp" style="left:0px;top:346px;width:165px"><div class="c g" style="width:55px">3</div><div class="c x" style="width:55px"></div><div class="c x" style="width:55px"></div><div class="dv" style="left:54px"></div></div>
<div class="grp" style="left:0px;top:403px;width:165px"><div class="c g" style="width:55px">4</div><div class="c g" style="width:55px"></div><div class="c x" style="width:55px"></div><div class="dv" style="left:54px"></div></div>
<div class="grp" style="left:0px;top:460px;width:165px"><div class="c g" style="width:55px">4</div><div class="c x" style="width:55px"></div><div class="c x" style="width:55px"></div><div class="dv" style="left:54px"></div></div>
<div class="grp" style="left:0px;top:517px;width:165px"><div class="c g" style="width:55px">4</div><div class="c x" style="width:55px"></div><div class="c x" style="width:55px"></div><div class="dv" style="left:54px"></div></div>
<div class="grp" style="left:0px;top:574px;width:165px"><div class="c g" style="width:55px">5</div><div class="c g" style="width:55px"></div><div class="c x" style="width:55px"></div><div class="dv" style="left:54px"></div></div>
<div class="grp" style="left:0px;top:631px;width:165px"><div class="c g" style="width:55px">2</div><div class="c g" style="width:55px"></div><div class="c x" style="width:55px"></div><div class="dv" style="left:54px"></div></div>
<div class="grp" style="left:0px;top:688px;width:165px"><div class="c g" style="width:55px">2</div><div class="c g" style="width:55px"></div><div class="c x" style="width:55px"></div><div class="dv" style="left:54px"></div></div>
<div class="grp" style="left:0px;top:745px;width:165px"><div class="c g" style="width:55px">5</div><div class="c x" style="width:55px"></div><div class="c x" style="width:55px"></div><div class="dv" style="left:54px"></div></div>
</div>
 <div class="sb"></div>
</div>
</body></html>
